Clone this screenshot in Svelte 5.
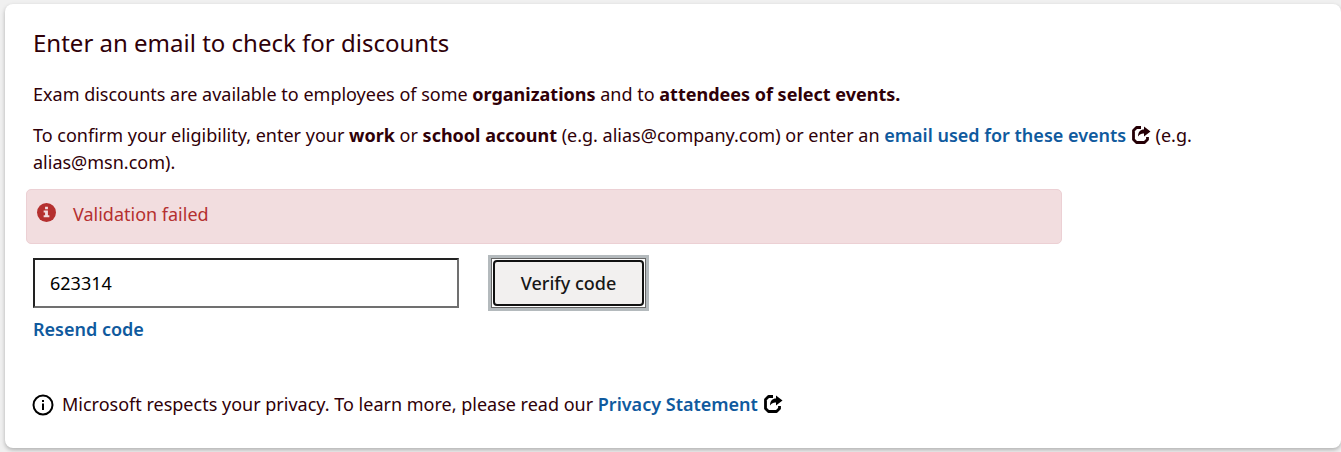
<script>
  let code = $state('623314');
</script>

{#snippet share()}
  <svg class="share" viewBox="0 0 20 20" aria-hidden="true">
    <path d="M10 2.500H5.500L2.500 5.500V14.500L5.500 17.500H13.500L16.500 14.500V12" fill="none" stroke="currentColor" stroke-width="2.800" stroke-linejoin="round" />
    <path d="M13 1.500 19.500 6.500 13 11.500V8.500C10.500 8.300 9 9 7 11.500 7 7 9.500 4.500 13 4.500Z" fill="currentColor" />
  </svg>
{/snippet}

<main>
  <section class="card">
    <h1>Enter an email to check for discounts</h1>
    <p>Exam discounts are available to employees of some <b>organizations</b> and to <b>attendees of select events.</b></p>
    <p>To confirm your eligibility, enter your <b>work</b> or <b>school account</b> (e.g. alias@company.com) or enter an <a href="#events">email used for these events {@render share()}</a> (e.g. alias@msn.com).</p>
    <div class="alert" role="alert">
      <svg viewBox="0 0 20 20" aria-hidden="true"><circle cx="10" cy="10" r="10" fill="#b5302f" /><path d="M8.500 4h3v2.500h-3zM7 8h4.500v5H13v2H7v-2h1.500v-3H7z" fill="#f2dddf" /></svg>
      <span>Validation failed</span>
    </div>
    <form onsubmit={(e) => e.preventDefault()}>
      <input type="text" aria-label="Verification code" bind:value={code} />
      <span class="focus-ring"><button class="verify">Verify code</button></span>
    </form>
    <a class="resend" href="#resend">Resend code</a>
    <footer>
      <svg class="info" viewBox="0 0 22 22" aria-hidden="true"><circle cx="11" cy="11" r="9.500" fill="none" stroke="#000" stroke-width="2" /><path d="M10 6h2v2h-2zM10 9.500h2V16h-2z" /></svg>
      <span>Microsoft respects your privacy. To learn more, please read our <a href="#privacy">Privacy Statement {@render share()}</a></span>
    </footer>
  </section>
</main>

<style>
  :global(body) { margin: 0; background: #f0f0f0; }
  main { padding: 4px 0 4px 5px; font: 18px/27px "Noto Sans", "Open Sans", sans-serif; color: #2f0008; }
  .card { padding: 23px 140px 30px 28px; background: #fff; border-radius: 8px; box-shadow: 0 2px 4px #0004; }
  h1 { margin: 0 0 22px; font-size: 24px; line-height: 32px; font-weight: 400; }
  p { margin: 0 0 14px; }
  b { font-weight: 700; }
  a { color: #0f5a9e; font-weight: 600; text-decoration: none; }
  .share { width: 20px; height: 20px; vertical-align: -3px; color: #250006; }
  footer .share { color: #000; }
  .alert { box-sizing: border-box; max-width: 1036px; min-height: 55px; margin: -1px 0 14px -7px; padding: 11px 10px; display: flex; gap: 17px; border: 1px solid #ecd0d4; border-radius: 5px; background: #f2dddf; color: #b5302f; }
  .alert svg { width: 19px; height: 19px; margin-top: 2px; }
  form { display: flex; align-items: center; gap: 29px; }
  input { box-sizing: border-box; width: 426px; height: 50px; padding: 0 15px; border: 2px solid; border-color: #222 #707070 #707070 #222; border-radius: 0; background: #fff; color: #000; font: inherit; }
  input:focus { outline: 2px solid #0f5a9e; }
  .focus-ring { display: flex; margin: 0 3px; padding: 1px; border: 1px solid #666; outline: 3px solid #b4babd; }
  .verify { box-sizing: border-box; width: 151px; height: 46px; padding: 0; border: 2px solid #111; border-radius: 4px; background: #f2f0ef; color: #171717; font: inherit; font-weight: 500; }
  .resend { display: block; margin-top: 8px; }
  footer { display: flex; align-items: center; gap: 8px; margin-top: 48px; }
  .info { width: 22px; height: 22px; margin-left: -1px; }
</style>
